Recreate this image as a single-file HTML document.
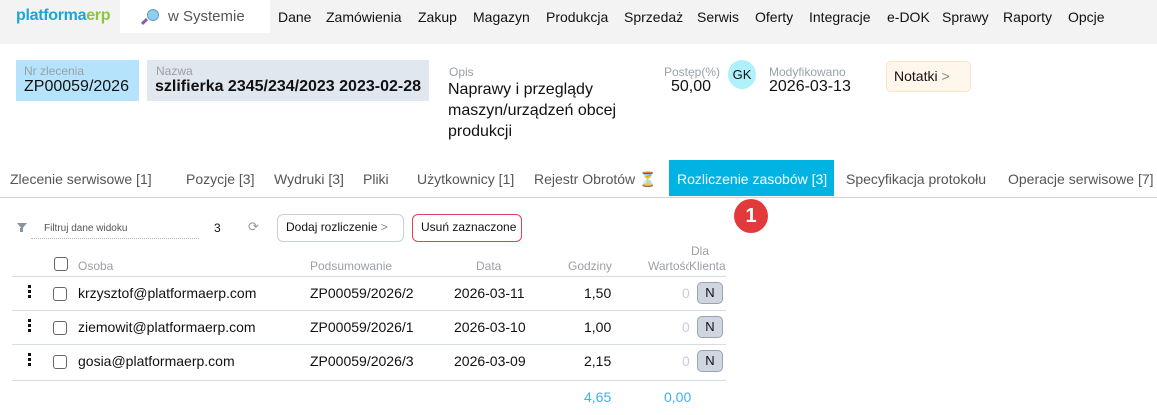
<!DOCTYPE html>
<html><head><meta charset="utf-8"><style>
*{box-sizing:border-box;margin:0;padding:0}
body{width:1157px;height:415px;overflow:hidden;background:#fff;font-family:"Liberation Sans",sans-serif;color:#111;position:relative}
.a{position:absolute;white-space:nowrap}
.nav{position:absolute;left:0;top:0;width:1157px;height:44px;background:#f3f3f3}
.lbl{font-size:12px;color:#9aa0a8}
.hd{font-size:12px;color:#9aa0a8}
.cb{position:absolute;width:14px;height:14px;border:1px solid #666;border-radius:3px;background:#fff}
.dots{position:absolute;width:3px}
.dots i{display:block;width:3px;height:3px;background:#111;margin-bottom:2px}
.N{position:absolute;width:26px;height:22px;background:#cfd6e0;border:1px solid #98a2b0;border-radius:5px;font-size:13px;text-align:center;line-height:20px}
.ln{position:absolute;left:12px;width:714px;height:1px;background:#d7dde5}
.t{font-size:14px}
.n{position:absolute;top:9px;font-size:14px;white-space:nowrap}
</style></head><body>
<div class="nav"></div>
<div class="a" style="left:16px;top:7px;font-size:16px;font-weight:bold;color:#1aa6d8;letter-spacing:-0.3px">platforma<span style="color:#8cc63f">erp</span></div>
<div class="a" style="left:120px;top:0;width:150px;height:33px;background:#fff"></div>
<div class="a" style="left:147px;top:9px;width:12px;height:12px;border-radius:50%;background:#8ed0f0;border:1px solid #5aa0c8"></div>
<div class="a" style="left:141px;top:20px;width:7px;height:3px;background:#8a5ab0;transform:rotate(-45deg)"></div>
<div class="a" style="left:168px;top:8px;font-size:15px;color:#555">w Systemie</div>
<div class="n" style="left:278px">Dane</div>
<div class="n" style="left:326px">Zamówienia</div>
<div class="n" style="left:418px">Zakup</div>
<div class="n" style="left:473px">Magazyn</div>
<div class="n" style="left:546px">Produkcja</div>
<div class="n" style="left:624px">Sprzedaż</div>
<div class="n" style="left:697px">Serwis</div>
<div class="n" style="left:755px">Oferty</div>
<div class="n" style="left:809px">Integracje</div>
<div class="n" style="left:887px">e-DOK</div>
<div class="n" style="left:942px">Sprawy</div>
<div class="n" style="left:1003px">Raporty</div>
<div class="n" style="left:1068px">Opcje</div>

<div class="a" style="left:16px;top:60px;width:123px;height:41px;background:#b5e3fb"></div>
<div class="a lbl" style="left:24px;top:64px">Nr zlecenia</div>
<div class="a" style="left:24px;top:78px;font-size:16px">ZP00059/2026</div>
<div class="a" style="left:147px;top:60px;width:282px;height:41px;background:#e1e7ef"></div>
<div class="a lbl" style="left:156px;top:64px">Nazwa</div>
<div class="a" style="left:155px;top:78px;font-size:16px;font-weight:bold">szlifierka 2345/234/2023 2023-02-28</div>
<div class="a lbl" style="left:449px;top:65px">Opis</div>
<div class="a" style="left:448px;top:79px;font-size:16px;line-height:21px;white-space:normal;width:210px">Naprawy i przeglądy maszyn/urządzeń obcej produkcji</div>
<div class="a lbl" style="left:664px;top:65px">Postęp(%)</div>
<div class="a" style="left:671px;top:78px;font-size:16px">50,00</div>
<div class="a" style="left:728px;top:60px;width:28px;height:29px;border-radius:50%;background:#aef1fb;font-size:13px;text-align:center;line-height:29px">GK</div>
<div class="a lbl" style="left:769px;top:65px">Modyfikowano</div>
<div class="a" style="left:769px;top:78px;font-size:16px">2026-03-13</div>
<div class="a" style="left:886px;top:61px;width:85px;height:31px;border:1px solid #fbe3c8;background:#fff6ec;border-radius:5px;font-size:14px;line-height:29px;padding-left:7px">Notatki <span style="color:#888">&gt;</span></div>

<div class="a t" style="left:10px;top:171px;color:#555">Zlecenie serwisowe [1]</div>
<div class="a t" style="left:186px;top:171px;color:#555">Pozycje [3]</div>
<div class="a t" style="left:274px;top:171px;color:#555">Wydruki [3]</div>
<div class="a t" style="left:363px;top:171px;color:#555">Pliki</div>
<div class="a t" style="left:417px;top:171px;color:#555">Użytkownicy [1]</div>
<div class="a t" style="left:534px;top:171px;color:#555">Rejestr Obrotów <span style="color:#d9a040">⏳</span></div>
<div class="a" style="left:669px;top:160px;width:165px;height:36px;background:#00b3e3"></div>
<div class="a t" style="left:677px;top:171px;color:#fff">Rozliczenie zasobów [3]</div>
<div class="a t" style="left:846px;top:171px;color:#555">Specyfikacja protokołu</div>
<div class="a t" style="left:1008px;top:171px;color:#555">Operacje serwisowe [7]</div>
<div class="a" style="left:0;top:197px;width:1157px;height:1px;background:#d0d4d8"></div>
<div class="a" style="left:734px;top:199px;width:34px;height:34px;border-radius:50%;background:#e23a3a;color:#fff;font-size:20px;font-weight:bold;text-align:center;line-height:34px">1</div>

<div class="a" style="left:17px;top:223px;width:0;height:0;border-left:5px solid transparent;border-right:5px solid transparent;border-top:6px solid #8a94a0"></div>
<div class="a" style="left:20px;top:228px;width:3px;height:4px;background:#8a94a0"></div>
<div class="a" style="left:31px;top:223px;font-size:10px;color:#555;width:168px;border-bottom:1px dotted #bbb;padding:0 0 4px 13px">Filtruj dane widoku</div>
<div class="a" style="left:214px;top:221px;font-size:12px">3</div>
<div class="a" style="left:248px;top:219px;font-size:13px;color:#999">⟳</div>
<div class="a" style="left:277px;top:214px;width:127px;height:28px;border:1.5px solid #c8d0da;border-radius:6px;font-size:12px;line-height:25px;padding-left:8px">Dodaj rozliczenie <span style="color:#888">&gt;</span></div>
<div class="a" style="left:412px;top:214px;width:110px;height:28px;border:1.5px solid #e04058;border-radius:6px;font-size:12px;line-height:25px;padding-left:8px">Usuń zaznaczone</div>

<div class="cb" style="left:54px;top:257px"></div>
<div class="a hd" style="left:78px;top:259px">Osoba</div>
<div class="a hd" style="left:310px;top:259px">Podsumowanie</div>
<div class="a hd" style="left:476px;top:259px">Data</div>
<div class="a hd" style="left:568px;top:259px">Godziny</div>
<div class="a hd" style="left:691px;top:244px">Dla</div>
<div class="a hd" style="left:648px;top:259px">Wartość</div>
<div class="a hd" style="left:689px;top:259px;background:#fff">Klienta</div>
<div class="ln" style="top:276px"></div>

<div class="dots" style="left:28px;top:285px"><i></i><i></i><i></i></div>
<div class="cb" style="left:53px;top:287px"></div>
<div class="a t" style="left:78px;top:285px">krzysztof@platformaerp.com</div>
<div class="a t" style="left:310px;top:285px">ZP00059/2026/2</div>
<div class="a t" style="left:454px;top:285px">2026-03-11</div>
<div class="a t" style="left:584px;top:285px">1,50</div>
<div class="a t" style="left:682px;top:285px;color:#ccd">0</div>
<div class="N" style="left:697px;top:282px">N</div>
<div class="ln" style="top:310px"></div>

<div class="dots" style="left:28px;top:319px"><i></i><i></i><i></i></div>
<div class="cb" style="left:53px;top:321px"></div>
<div class="a t" style="left:78px;top:319px">ziemowit@platformaerp.com</div>
<div class="a t" style="left:310px;top:319px">ZP00059/2026/1</div>
<div class="a t" style="left:454px;top:319px">2026-03-10</div>
<div class="a t" style="left:584px;top:319px">1,00</div>
<div class="a t" style="left:682px;top:319px;color:#ccd">0</div>
<div class="N" style="left:697px;top:316px">N</div>
<div class="ln" style="top:344px"></div>

<div class="dots" style="left:28px;top:353px"><i></i><i></i><i></i></div>
<div class="cb" style="left:53px;top:355px"></div>
<div class="a t" style="left:78px;top:353px">gosia@platformaerp.com</div>
<div class="a t" style="left:310px;top:353px">ZP00059/2026/3</div>
<div class="a t" style="left:454px;top:353px">2026-03-09</div>
<div class="a t" style="left:584px;top:353px">2,15</div>
<div class="a t" style="left:682px;top:353px;color:#ccd">0</div>
<div class="N" style="left:697px;top:350px">N</div>
<div class="ln" style="top:380px"></div>

<div class="a t" style="left:584px;top:389px;color:#3fb0ec">4,65</div>
<div class="a t" style="left:664px;top:389px;color:#3fb0ec">0,00</div>
</body></html>
